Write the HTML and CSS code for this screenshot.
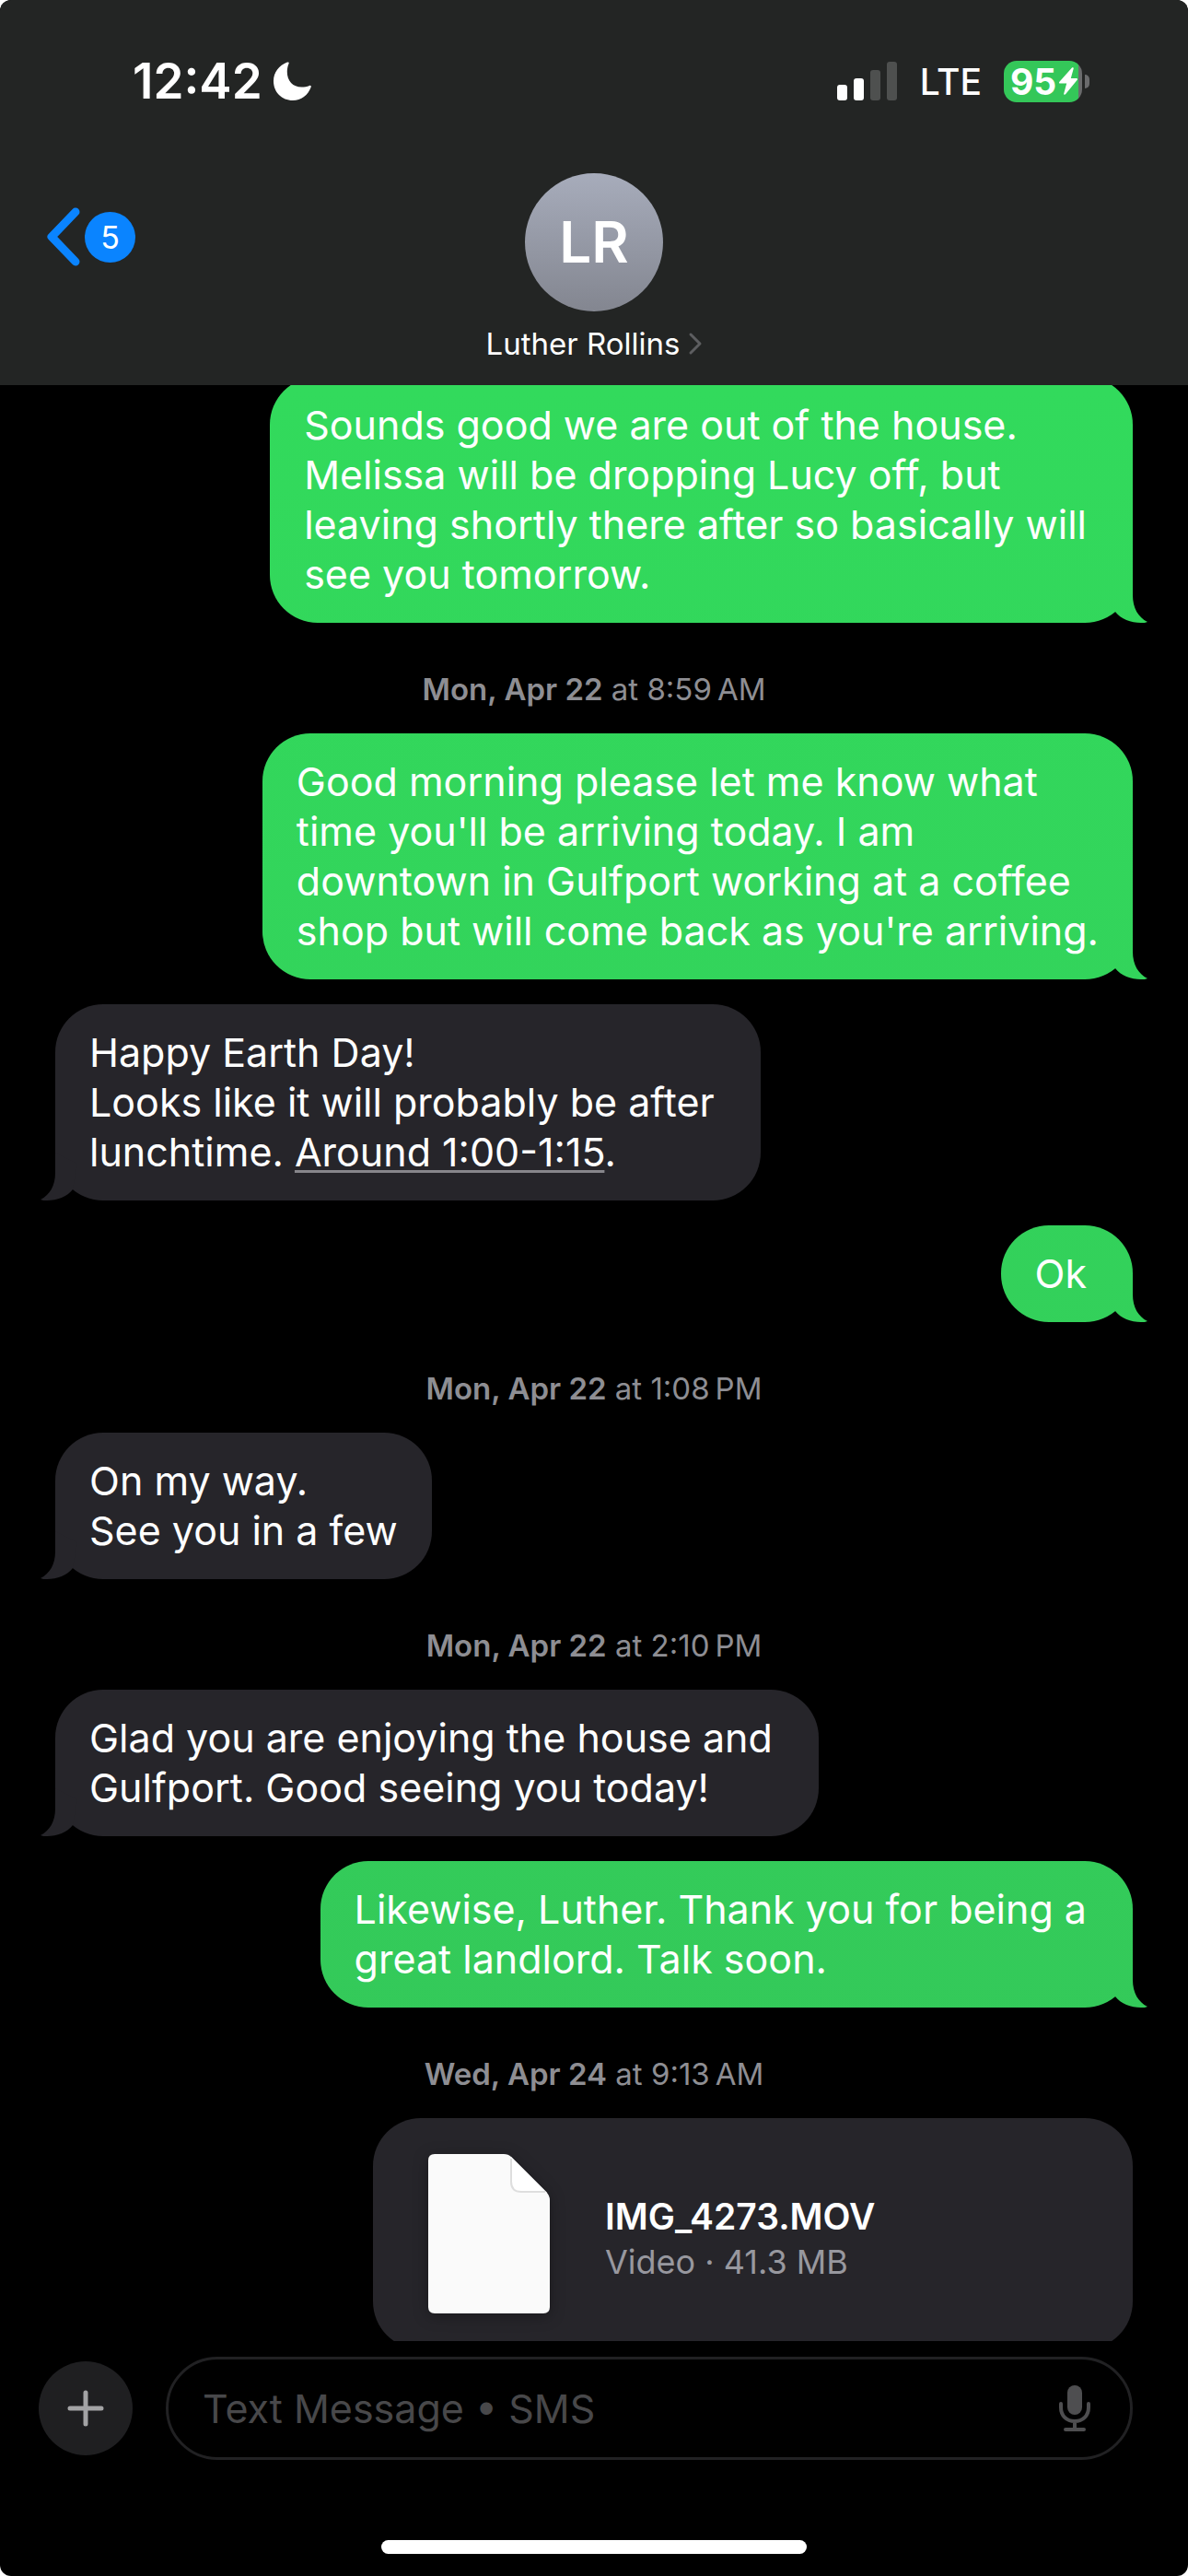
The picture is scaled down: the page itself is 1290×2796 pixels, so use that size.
FILE: index.html
```html
<!DOCTYPE html>
<html lang="en">
<head>
<meta charset="utf-8">
<meta name="viewport" content="width=device-width, initial-scale=1">
<title>Messages – Luther Rollins</title>
<link rel="stylesheet" href="styles.css">
</head>
<body>
<div class="phone">
  <header class="header">
    <div class="status">
      <div class="status-left">
        <span class="clock">12:42</span>
        <svg class="moon" viewBox="0 0 41 42" aria-hidden="true"><path d="M15 0.6C16.3 0.1 17 0.8 16.6 2C15.2 5 14.8 8.500 14.800 11C14.800 21 21 27.500 30.500 27.500C33.500 27.500 36.500 27 39 25.900C40.300 25.400 41.200 26.200 40.700 27.600C37.600 36.300 30 42 21 42C9 42 0 33 0 21C0 11.500 6 3.900 15 0.600Z" fill="#fff"/></svg>
      </div>
      <div class="status-right">
        <svg class="signal" viewBox="0 0 66 42" aria-hidden="true">
          <rect x="0" y="25" width="11" height="17" rx="3" fill="#fff"/>
          <rect x="18" y="18" width="11" height="24" rx="3" fill="#fff"/>
          <rect x="36" y="9" width="11" height="33" rx="3" fill="#4e504f"/>
          <rect x="54" y="0" width="11" height="42" rx="3" fill="#4e504f"/>
        </svg>
        <span class="network">LTE</span>
        <div class="battery">
          <div class="battery-body">
            <span>95</span>
            <svg class="bolt" viewBox="0 0 20 30" aria-hidden="true"><path d="M14 0.500C15 -0.300 16 0.300 15.700 1.600L12.800 12H19C20 12 20.300 13 19.700 13.800L7 29.300C6 30.300 4.900 29.600 5.200 28.400L8.200 17.500H1C0 17.500 -0.300 16.500 0.400 15.700Z" fill="#fff"/></svg>
          </div>
          <span class="battery-cap"></span>
        </div>
      </div>
    </div>
    <nav class="nav">
      <button class="back" type="button" aria-label="Back, 5 unread">
        <svg class="back-icon" viewBox="0 0 37 64" aria-hidden="true"><path d="M32 5L6 32L32 59" fill="none" stroke="#0a84ff" stroke-width="9" stroke-linecap="round" stroke-linejoin="round"/></svg>
        <span class="badge">5</span>
      </button>
      <button class="contact" type="button">
        <span class="avatar">LR</span>
        <span class="contact-name">Luther Rollins
          <svg class="chevron" viewBox="0 0 14 24" aria-hidden="true"><path d="M2 2L12 12L2 22" fill="none" stroke="#5d5e60" stroke-width="3" stroke-linecap="round" stroke-linejoin="round"/></svg>
        </span>
      </button>
    </nav>
  </header>

  <main class="thread">
    <p class="bubble sent">Sounds good we are out of the house.<br>Melissa will be dropping Lucy off, but<br>leaving shortly there after so basically will<br>see you tomorrow.</p>
    <time class="stamp"><b>Mon, Apr 22</b> at 8:59&#8239;AM</time>
    <p class="bubble sent snug">Good morning please let me know what<br>time you'll be arriving today. I am<br>downtown in Gulfport working at a coffee<br>shop but will come back as you're arriving.</p>
    <p class="bubble received">Happy Earth Day!<br>Looks like it will probably be after<br>lunchtime. <a class="detected" href="#">Around 1:00-1:15</a>.</p>
    <p class="bubble sent">Ok</p>
    <time class="stamp"><b>Mon, Apr 22</b> at 1:08&#8239;PM</time>
    <p class="bubble received snug">On my way.<br>See you in a few</p>
    <time class="stamp"><b>Mon, Apr 22</b> at 2:10&#8239;PM</time>
    <p class="bubble received">Glad you are enjoying the house and<br>Gulfport. Good seeing you today!</p>
    <p class="bubble sent">Likewise, Luther. Thank you for being a<br>great landlord. Talk soon.</p>
    <time class="stamp"><b>Wed, Apr 24</b> at 9:13&#8239;AM</time>
    <a class="file" href="#">
      <svg class="file-icon" viewBox="0 0 132 173" aria-hidden="true">
        <path d="M7 0H82Q87 0 90 3L128 41Q132 45 132 50V166Q132 173 125 173H7Q0 173 0 166V7Q0 0 7 0Z" fill="#fafafa"/>
        <path d="M90 3L129 42H102Q90 42 90 30Z" fill="#fff"/>
        <path d="M90 5V30Q90 41 101 41H127" fill="none" stroke="#dedede" stroke-width="2"/>
      </svg>
      <span class="file-text">
        <span class="file-name">IMG_4273.MOV</span>
        <span class="file-meta">Video · 41.3 MB</span>
      </span>
    </a>
  </main>

  <footer class="footer">
    <form class="composer">
      <button class="add" type="button" aria-label="Add attachment">
        <svg class="add-icon" viewBox="0 0 40 40" aria-hidden="true"><path d="M20 3V37M3 20H37" stroke="#a3a3a5" stroke-width="5" stroke-linecap="round"/></svg>
      </button>
      <div class="field">
        <input class="field-input" type="text" aria-label="Text message" placeholder="Text Message • SMS">
        <button class="dictate" type="button" aria-label="Dictate">
          <svg class="mic" viewBox="0 0 34 50" aria-hidden="true">
            <rect x="9" y="0" width="16" height="32" rx="8" fill="#4e4e50"/>
            <path d="M2 20V24C2 33 8 39 17 39S32 33 32 24V20M17 39V48M7 48H27" fill="none" stroke="#4e4e50" stroke-width="4" stroke-linecap="round"/>
          </svg>
        </button>
      </div>
    </form>
    <div class="home"></div>
  </footer>
</div>
</body>
</html>
```
FILE: styles.css
```css
* {
  box-sizing: border-box;
}

body {
  margin: 0;
  background: #fff;
  color: #fff;
  font-family: Inter, "Liberation Sans", sans-serif;
}

button {
  padding: 0;
  border: 0;
  background: none;
  color: inherit;
  font: inherit;
}

svg {
  display: block;
  flex: none;
  overflow: visible;
}

.phone {
  display: flex;
  flex-direction: column;
  height: 100vh;
  overflow: hidden;
  border-radius: 12px;
  background: #000;
}

/* Header */

.header {
  flex: none;
  padding-bottom: 23px;
  background: #232524;
}

.status {
  display: flex;
  align-items: center;
  justify-content: space-between;
  height: 176px;
  padding: 0 107px 0 144px;
}

.status-left,
.status-right {
  display: flex;
  align-items: center;
}

.status-left {
  gap: 12px;
}

.clock {
  font-size: 53px;
  font-weight: 600;
}

.moon {
  width: 41px;
  height: 42px;
}

.signal {
  width: 66px;
  height: 42px;
}

.network {
  margin: 0 24px;
  font-size: 39px;
  font-weight: 500;
}

.battery {
  display: flex;
  align-items: center;
  gap: 3px;
}

.battery-body {
  display: flex;
  align-items: center;
  justify-content: space-between;
  width: 85px;
  height: 45px;
  padding: 0 5px 0 7px;
  border-radius: 14px;
  background: linear-gradient(90deg, #34c759 81px, #6a6b6c 81px);
  font-size: 39px;
  font-weight: 700;
}

.bolt {
  width: 20px;
  height: 30px;
}

.battery-cap {
  width: 5px;
  height: 15px;
  border-radius: 0 5px 5px 0;
  background: #6a6b6c;
}

.nav {
  display: grid;
  grid-template-columns: 1fr auto 1fr;
  align-items: start;
  padding: 12px 50px 0;
}

.back {
  display: flex;
  align-items: center;
  justify-self: start;
  gap: 5px;
  margin-top: 37px;
}

.back-icon {
  width: 37px;
  height: 64px;
}

.badge {
  width: 55px;
  border-radius: 50%;
  background: #0a84ff;
  font-size: 34px;
  line-height: 55px;
  text-align: center;
}

.contact {
  display: flex;
  flex-direction: column;
  align-items: center;
  gap: 13px;
}

.avatar {
  width: 150px;
  border-radius: 50%;
  background: linear-gradient(#a7acbb, #838690);
  font-size: 62px;
  font-weight: 600;
  line-height: 150px;
  text-align: center;
}

.contact-name {
  display: flex;
  align-items: center;
  gap: 10px;
  font-size: 33px;
  line-height: 44px;
}

.chevron {
  width: 14px;
  height: 24px;
}

/* Conversation */

.thread {
  display: flex;
  flex: 1;
  flex-direction: column;
  justify-content: center;
  gap: 27px;
  min-height: 0;
  padding: 0 60px;
  overflow: hidden;
}

.bubble {
  position: relative;
  flex: none;
  margin: 0;
  padding: 25px 50px 26px 37px;
  border-radius: 52px;
  font-size: 43px;
  line-height: 54px;
  white-space: nowrap;
}

.bubble.snug {
  padding-right: 37px;
}

.bubble::after {
  position: absolute;
  bottom: 0;
  width: 40px;
  height: 60px;
  content: "";
}

.sent {
  align-self: flex-end;
}

.sent,
.sent::after {
  background: linear-gradient(#32da5c 15%, #34c759 88%) fixed;
}

.sent::after {
  right: -16px;
  clip-path: path("M24 8V30C24 44 30 54 40 59C38 60 36 60 33 60C22 60 11 56 5 48L0 20Z");
}

.received {
  align-self: flex-start;
}

.received,
.received::after {
  background: #26252a;
}

.received::after {
  left: -16px;
  clip-path: path("M16 8V30C16 44 10 54 0 59C2 60 4 60 7 60C18 60 29 56 35 48L40 20Z");
}

.detected {
  color: inherit;
  text-decoration: underline;
  text-decoration-color: #87868b;
  text-decoration-thickness: 3px;
  text-underline-offset: 4px;
}

.stamp {
  flex: none;
  padding-top: 25px;
  color: #8e8e93;
  font-size: 33px;
  line-height: 41px;
  text-align: center;
}

.stamp b {
  font-weight: 600;
}

.file {
  display: flex;
  flex: none;
  align-items: center;
  align-self: flex-end;
  gap: 60px;
  width: 825px;
  max-width: 100%;
  padding: 39px 60px;
  border-radius: 52px;
  background: #26252a;
  color: #fff;
  text-decoration: none;
}

.file-icon {
  width: 132px;
  height: 173px;
  filter: drop-shadow(0 3px 8px rgb(0 0 0 / 30%));
}

.file-text {
  display: flex;
  flex-direction: column;
  padding-top: 10px;
}

.file-name {
  font-size: 39px;
  font-weight: 600;
  line-height: 50px;
}

.file-meta {
  color: #98989f;
  font-size: 36px;
  line-height: 48px;
}

/* Composer */

.footer {
  flex: none;
  padding: 17px 0 24px;
}

.composer {
  display: flex;
  align-items: center;
  gap: 36px;
  padding: 0 60px 0 42px;
}

.add {
  display: grid;
  flex: none;
  place-items: center;
  width: 102px;
  height: 102px;
  border-radius: 50%;
  background: #1f1f21;
}

.add-icon {
  width: 40px;
  height: 40px;
}

.field {
  display: flex;
  flex: 1;
  align-items: center;
  height: 112px;
  padding: 0 43px 0 37px;
  border: 3px solid #212123;
  border-radius: 56px;
}

.field-input {
  flex: 1;
  min-width: 0;
  padding: 0;
  border: 0;
  outline: 0;
  background: none;
  color: #fff;
  font: 43px/60px Inter, "Liberation Sans", sans-serif;
}

.field-input::placeholder {
  color: #48484a;
  opacity: 1;
}

.mic {
  width: 34px;
  height: 50px;
}

.home {
  width: 462px;
  height: 15px;
  margin: 87px auto 0;
  border-radius: 8px;
  background: #fff;
}
```
